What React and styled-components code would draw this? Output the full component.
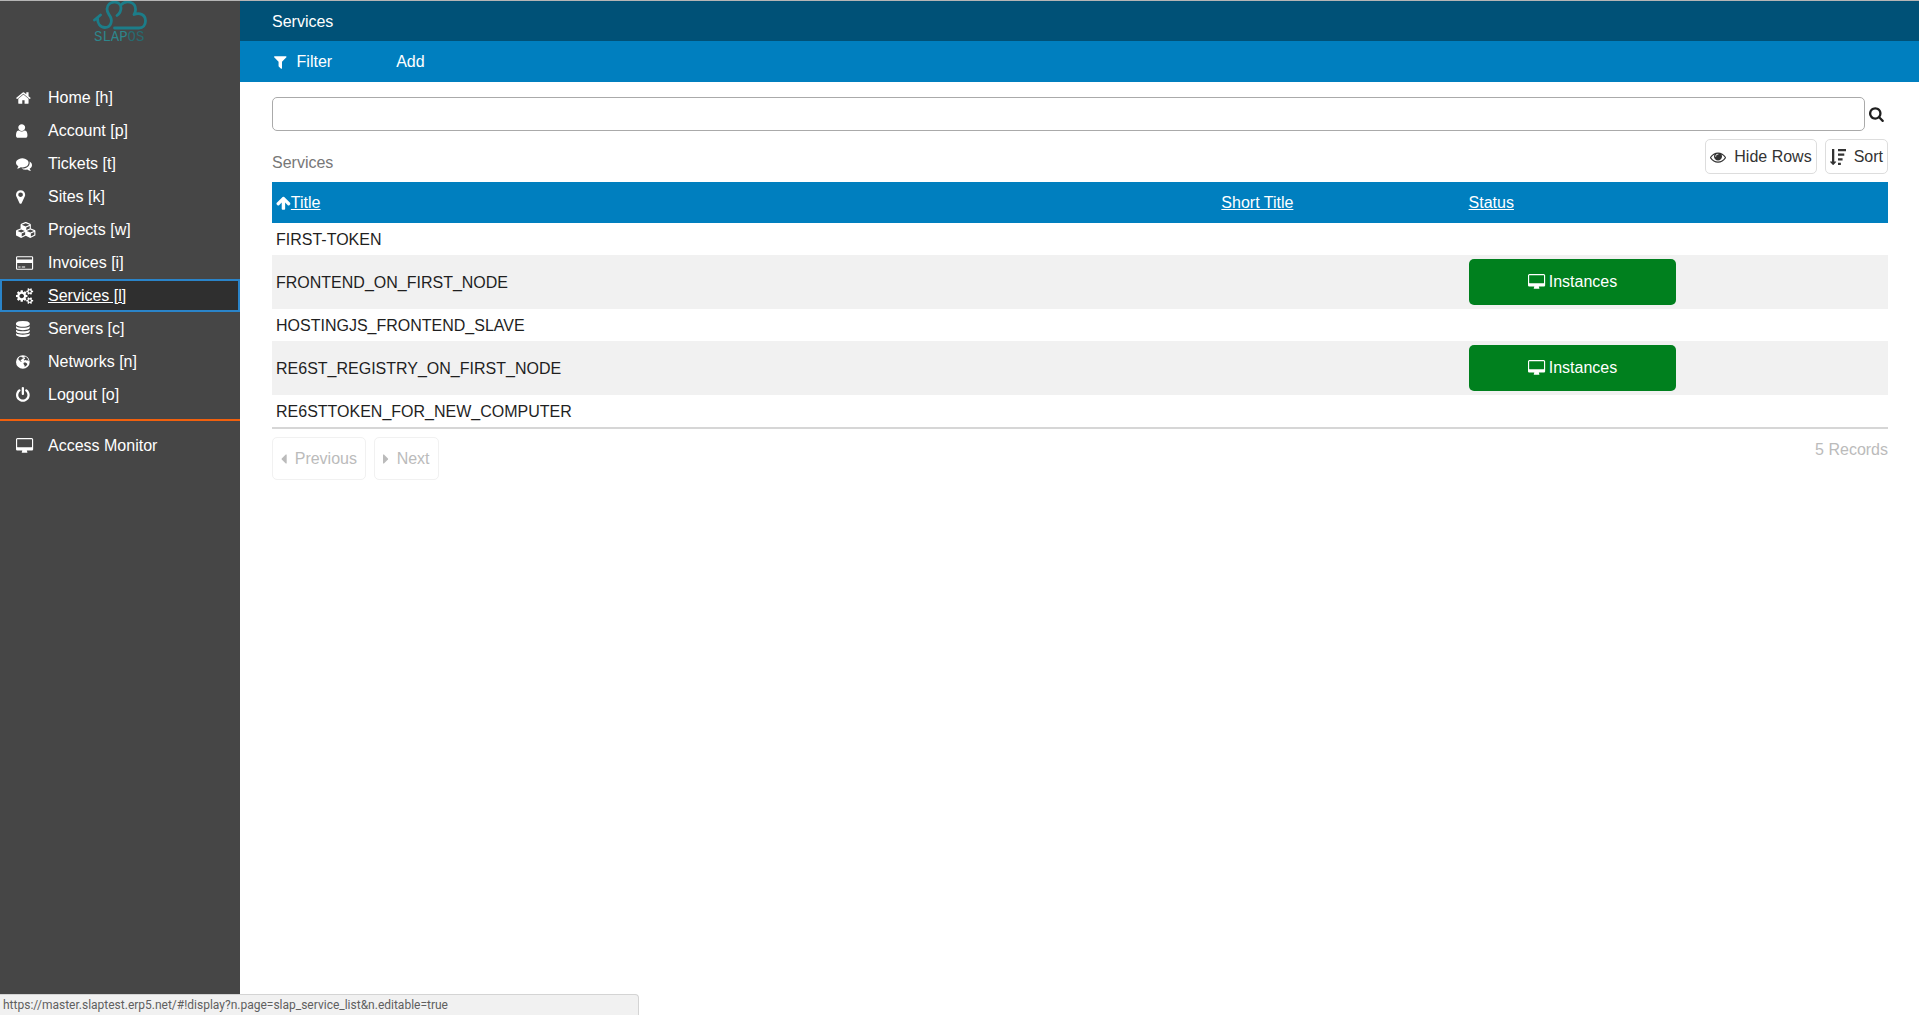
import React from "react";
import styled, { createGlobalStyle } from "styled-components";

const GlobalStyle = createGlobalStyle`
    * {
        box-sizing: border-box;
    }

    body {
        margin: 0;
        background: #fff;
        color: #1f1f1f;
        font-family: "Liberation Sans", Arial, sans-serif;
        font-size: 16px;
        line-height: 24px;
    }
`;

/* [min-x, width, path] on a 1792 unit em */
const gear = "v140q0 16-149 31-12 27-30 52 51 113 51 138 0 4-4 7-122 71-124 71-8 0-46-47t-52-68q-20 2-30 2t-30-2q-14 21-52 68t-46 47q-2 0-124-71-4-3-4-7 0-25 51-138-18-25-30-52-149-15-149-31v-140q0-16 149-31 13-29 30-52-51-113-51-138 0-4 4-7 4-2 35-20t59-34 30-16q8 0 46 46.5t52 67.5q20-2 30-2t30 2q51-71 92-112l6-2q4 0 124 70 4 3 4 7 0 25-51 138 17 23 30 52 149 15 149 31z";

const icons = {
    home: [64, 1664, "M1472 992v480q0 26-19 45t-45 19h-384v-384h-256v384h-384q-26 0-45-19t-19-45v-480q0-1 .5-3t.5-3l575-474 575 474q1 2 1 6zm223-69l-62 74q-8 9-21 11h-3q-13 0-21-7l-692-577-692 577q-12 8-24 7-13-2-21-11l-62-74q-8-10-7-23.5t11-21.5l719-599q32-26 76-26t76 26l244 204v-195q0-14 9-23t23-9h192q14 0 23 9t9 23v408l219 182q10 8 11 21.5t-7 23.5z"],
    user: [256, 1280, "M1536 1399q0 109-62.5 187t-150.5 78h-854q-88 0-150.5-78t-62.5-187q0-85 8.5-160.5t31.5-152 58.5-131 94-89 134.5-34.5q131 128 313 128t313-128q76 0 134.5 34.5t94 89 58.5 131 31.5 152 8.5 160.5zm-256-887q0 159-112.5 271.5t-271.5 112.5-271.5-112.5-112.5-271.5 112.5-271.5 271.5-112.5 271.5 112.5 112.5 271.5z"],
    comments: [0, 1792, "M1408 768q0 139-94 257t-256.5 186.5-353.5 68.5q-86 0-176-16-124 88-278 128-36 9-86 16h-3q-11 0-20.5-8t-11.5-21q-1-3-1-6.5t.5-6.5 2-6l2.5-5 3.5-5.5 4-5 4.5-5 4-4.5q5-6 23-25t26-29.5 22.5-29 25-38.5 20.5-44q-124-72-195-177t-71-224q0-139 94-257t256.5-186.5 353.5-68.5 353.5 68.5 256.5 186.5 94 257zm384 256q0 120-71 224.5t-195 176.5q10 24 20.5 44t25 38.5 22.5 29 26 29.5 23 25q1 1 4 4.5t4.5 5 4 5 3.5 5.5l2.5 5 2 6 .5 6.5-1 6.5q-3 14-13 22t-22 7q-50-7-86-16-154-40-278-128-90 16-176 16-271 0-472-132 58 4 88 4 161 0 309-45t264-129q125-92 192-212t67-254q0-77-23-152 129 71 204 178t75 230z"],
    marker: [384, 1024, "M1152 640q0-106-75-181t-181-75-181 75-75 181 75 181 181 75 181-75 75-181zm256 0q0 109-33 179l-364 774q-16 33-47.5 52t-67.5 19-67.5-19-46.5-52l-365-774q-33-70-33-179 0-212 150-362t362-150 362 150 150 362z"],
    cubes: [0, 2304, "M640 1632l384-192v-314l-384 164v342zm-64-454l404-173-404-173-404 173zm1088 454l384-192v-314l-384 164v342zm-64-454l404-173-404-173-404 173zm-448-293l384-165v-266l-384 164v267zm-64-379l441-189-441-189-441 189zm1088 518v416q0 36-19 67t-52 47l-448 224q-25 14-57 14t-57-14l-448-224q-4-2-7-4-2 2-7 4l-448 224q-25 14-57 14t-57-14l-448-224q-33-16-52-47t-19-67v-416q0-38 21.5-70t56.5-48l434-186v-400q0-38 21.5-70t56.5-48l448-192q23-10 50-10t50 10l448 192q35 16 56.5 48t21.5 70v400l434 186q36 16 57 48t21 70z"],
    card: [0, 1920, "M1760 128q66 0 113 47t47 113v1216q0 66-47 113t-113 47h-1600q-66 0-113-47t-47-113v-1216q0-66 47-113t113-47h1600zm-1600 128q-13 0-22.5 9.5t-9.5 22.5v224h1664v-224q0-13-9.5-22.5t-22.5-9.5h-1600zm1600 1280q13 0 22.5-9.5t9.5-22.5v-608h-1664v608q0 13 9.5 22.5t22.5 9.5h1600zm-1504-128v-128h256v128h-256zm384 0v-128h384v128h-384z"],
    cogs: [0, 1920, "M896 896q0-106-75-181t-181-75-181 75-75 181 75 181 181 75 181-75 75-181zm768 512q0-52-38-90t-90-38-90 38-38 90q0 53 37.5 90.5t90.5 37.5 90.5-37.5 37.5-90.5zm0-1024q0-52-38-90t-90-38-90 38-38 90q0 53 37.5 90.5t90.5 37.5 90.5-37.5 37.5-90.5zm-384 421v185q0 10-7 19.5t-16 10.5l-155 24q-11 35-32 76 34 48 90 115 7 11 7 20 0 12-7 19-23 30-82.5 89.5t-78.5 59.5q-11 0-21-7l-115-90q-37 19-77 31-11 108-23 155-7 24-30 24h-186q-11 0-20-7.5t-10-17.5l-23-153q-34-10-75-31l-118 89q-7 7-20 7-11 0-21-8-144-133-144-160 0-9 7-19 10-14 41-53t47-61q-23-44-35-82l-152-24q-10-1-17-9.5t-7-19.5v-185q0-10 7-19.5t16-10.5l155-24q11-35 32-76-34-48-90-115-7-11-7-20 0-12 7-20 22-30 82-89t79-59q11 0 21 7l115 90q34-18 77-32 11-108 23-154 7-24 30-24h186q11 0 20 7.5t10 17.5l23 153q34 10 75 31l118-89q8-7 20-7 11 0 21 8 144 133 144 160 0 8-7 19-12 16-42 54t-45 60q23 48 34 82l152 23q10 2 17 10.5t7 19.5zM1920 1338" + gear + "M1920 314" + gear],
    database: [128, 1536, "M896 768q237 0 443-43t325-127v170q0 69-103 128t-280 93.5-385 34.5-385-34.5-280-93.5-103-128v-170q119 84 325 127t443 43zm0 768q237 0 443-43t325-127v170q0 69-103 128t-280 93.5-385 34.5-385-34.5-280-93.5-103-128v-170q119 84 325 127t443 43zm0-384q237 0 443-43t325-127v170q0 69-103 128t-280 93.5-385 34.5-385-34.5-280-93.5-103-128v-170q119 84 325 127t443 43zm0-1152q208 0 385 34.5t280 93.5 103 128v128q0 69-103 128t-280 93.5-385 34.5-385-34.5-280-93.5-103-128v-128q0-69 103-128t280-93.5 385-34.5z"],
    globe: [128, 1536, "M896 128a768 768 0 1 1 0 1536a768 768 0 1 1 0-1536zM620 300L470 400L400 540L430 660L560 760L690 900L760 880L720 800L640 740L640 660L740 640L800 560L900 500L1010 460L930 380L800 380L740 310zM1100 280L1060 380L1160 470L1100 560L1000 640L1040 720L1200 680L1320 740L1420 700L1500 800L1540 720L1460 520L1340 390L1220 310zM1020 940L960 1060L1030 1220L1100 1300L1080 1440L1220 1380L1360 1240L1400 1120L1320 1040L1200 960z"],
    power: [128, 1536, "M1664 896q0 156-61 298t-164 245-245 164-298 61-298-61-245-164-164-245-61-298q0-182 80.5-343t226.5-270q43-32 95.5-25t83.5 50q32 42 24.5 94.5t-49.5 84.5q-98 74-151.5 181t-53.5 228q0 104 40.5 198.5t109.5 163.5 163.5 109.5 198.5 40.5 198.5-40.5 163.5-109.5 109.5-163.5 40.5-198.5q0-121-53.5-228t-151.5-181q-42-32-49.5-84.5t24.5-94.5q31-43 84-50t95 25q146 109 226.5 270t80.5 343zm-640-768v640q0 52-38 90t-90 38-90-38-38-90v-640q0-52 38-90t90-38 90 38 38 90z"],
    desktop: [0, 1920, "M1792 992v-832q0-13-9.5-22.5t-22.5-9.5h-1600q-13 0-22.5 9.5t-9.5 22.5v832q0 13 9.5 22.5t22.5 9.5h1600q13 0 22.5-9.5t9.5-22.5zm128-832v1088q0 66-47 113t-113 47h-544q0 37 16 77.5t32 71 16 43.5q0 26-19 45t-45 19h-512q-26 0-45-19t-19-45q0-14 16-44t32-70 16-78h-544q-66 0-113-47t-47-113v-1088q0-66 47-113t113-47h1600q66 0 113 47t47 113z"],
    filter: [192, 1408, "M1595 295q17 41-14 70l-493 493v742q0 42-39 59-13 5-25 5-27 0-45-19l-256-256q-19-19-19-45v-486l-493-493q-31-29-14-70 17-39 59-39h1280q42 0 59 39z"],
    search: [64, 1664, "M1216 832q0-185-131.5-316.5t-316.5-131.5-316.5 131.5-131.5 316.5 131.5 316.5 316.5 131.5 316.5-131.5 131.5-316.5zm512 832q0 52-38 90t-90 38q-54 0-90-38l-343-342q-179 124-399 124-143 0-273.5-55.5t-225-150-150-225-55.5-273.5 55.5-273.5 150-225 225-150 273.5-55.5 273.5 55.5 225 150 150 225 55.5 273.5q0 220-124 399l343 343q37 37 37 90z"],
    eye: [0, 1792, "M1664 960q-152-236-381-353 61 104 61 225 0 185-131.5 316.5t-316.5 131.5-316.5-131.5-131.5-316.5q0-121 61-225-229 117-381 353 133 205 333.5 326.5t434.5 121.5 434.5-121.5 333.5-326.5zm-720-384q0-20-14-34t-34-14q-125 0-214.5 89.5t-89.5 214.5q0 20 14 34t34 14 34-14 14-34q0-86 61-147t147-61q20 0 34-14t14-34zm848 384q0 34-20 69-140 230-376.5 368.5t-499.5 138.5-499.5-139-376.5-368q-20-35-20-69t20-69q140-229 376.5-368t499.5-139 499.5 139 376.5 368q20 35 20 69z"],
    sort: [0, 1792, "M704 1440q0 12-10 24l-319 319q-10 9-23 9-12 0-23-9l-320-320q-15-16-7-35 8-20 30-20h192v-1376q0-14 9-23t23-9h192q14 0 23 9t9 23v1376h192q14 0 23 9t9 23zM896 0h896v256h-896zM896 512h704v256h-704zM896 1024h512v256h-512zM896 1536h320v256h-320z"],
    up: [64, 1664, "M1675 971q0 51-37 90l-75 75q-38 38-91 38-54 0-90-38l-294-293v704q0 52-37.5 84.5t-90.5 32.5h-128q-53 0-90.5-32.5t-37.5-84.5v-704l-294 293q-36 38-90 38t-90-38l-75-75q-38-38-38-90 0-53 38-91l651-651q35-37 90-37 54 0 91 37l651 651q37 39 37 91z"],
    left: [512, 640, "M1152 448v896q0 26-19 45t-45 19-45-19l-448-448q-19-19-19-45t19-45l448-448q19-19 45-19t45 19 19 45z"],
    right: [576, 640, "M1152 896q0 26-19 45l-448 448q-19 19-45 19t-45-19-19-45v-896q0-26 19-45t45-19 45 19l448 448q19 19 19 45z"],
};

const Glyph = styled.svg`
    display: block;
    flex: none;
    height: 16px;
    fill: currentColor;
    overflow: visible;
`;

const Icon = ({ name }) => {
    const [x, width, path] = icons[name];
    return (
        <Glyph viewBox={`${x} 0 ${width} 1792`} width={(width * 16) / 1792} aria-hidden="true">
            <path fillRule={name === "globe" ? "evenodd" : "nonzero"} d={path} />
        </Glyph>
    );
};

const Page = styled.div`
    display: flex;
    min-height: 100vh;
    border-top: 1px solid #b5b5b5;
`;

const Sidebar = styled.aside`
    flex: none;
    width: 240px;
    background: #464646;
    color: #fff;
`;

const Logo = styled.svg`
    display: block;
    width: 70px;
    height: 46px;
    margin: 0 auto 34px;
`;

const MenuList = styled.ul`
    list-style: none;
    margin: 0;
    padding: 0 0 8px;

    & + & {
        border-top: 2px solid #f1600d;
        padding-top: 8px;
    }
`;

const MenuLink = styled.a`
    display: flex;
    align-items: center;
    height: 33px;
    padding: 0 14px;
    border: 2px solid ${(props) => (props.$active ? "#2a84c9" : "transparent")};
    background: ${(props) => (props.$active ? "#2f2f2f" : "transparent")};
    color: #fff;
    text-decoration: ${(props) => (props.$active ? "underline" : "none")};
`;

const MenuIcon = styled.span`
    flex: none;
    width: 32px;
`;

const Main = styled.main`
    flex: 1;
    min-width: 0;
`;

const Header = styled.header`
    height: 40px;
    padding: 9px 32px 0;
    background: #005177;
    color: #fff;
`;

const HeaderTitle = styled.h1`
    margin: 0;
    font-size: 16px;
    font-weight: 400;
`;

const Toolbar = styled.nav`
    display: flex;
    align-items: center;
    gap: 64px;
    height: 41px;
    padding: 0 32px;
    background: #007fbf;
`;

const ToolbarLink = styled.a`
    display: flex;
    align-items: center;
    gap: 10px;
    padding-left: ${(props) => (props.$icon ? "2px" : "0")};
    color: #fff;
    text-decoration: none;
`;

const Content = styled.div`
    padding: 15px 31px 15px 32px;
`;

const SearchForm = styled.form`
    display: flex;
    align-items: center;
    gap: 4px;
`;

const SearchInput = styled.input`
    flex: 1;
    min-width: 0;
    height: 34px;
    padding: 0 8px;
    border: 1px solid #aaa;
    border-radius: 5px;
    background: #fff;
    font: inherit;
`;

const SearchButton = styled.button`
    padding: 0 4px 0 0;
    border: 0;
    background: none;
    color: #1f1f1f;
`;

const ListHead = styled.div`
    display: flex;
    align-items: center;
    justify-content: space-between;
    height: 51px;
`;

const ListTitle = styled.h2`
    margin: 0;
    padding-top: 12px;
    color: #777;
    font-size: 16px;
    font-weight: 400;
`;

const ButtonGroup = styled.div`
    display: flex;
    gap: 8px;
`;

const Button = styled.button`
    display: flex;
    align-items: center;
    gap: 8px;
    height: 35px;
    padding: 0 4px;
    border: 1px solid #ddd;
    border-radius: 5px;
    background: #fff;
    color: #333;
    font: inherit;
`;

const PageButton = styled(Button)`
    height: 43px;
    padding: 0 8px;
    border-color: #f1f1f1;
    color: #bbb;
`;

const Table = styled.table`
    width: 100%;
    table-layout: fixed;
    border-collapse: collapse;
    border-bottom: 2px solid #d6d6d6;
`;

const HeadCell = styled.th`
    width: ${(props) => props.$width};
    height: 41px;
    padding: 0 4px;
    background: #007fbf;
    color: #fff;
    font-weight: 400;
    text-align: left;
`;

const SortLink = styled.a`
    color: #fff;
`;

const HeadLabel = styled.span`
    display: flex;
    align-items: center;
`;

const Row = styled.tr`
    &:nth-child(even) {
        background: #f1f1f1;
    }
`;

const Cell = styled.td`
    padding: ${(props) => (props.$text ? "5px 4px 3px" : "4px")};
`;

const InstancesLink = styled.a`
    display: flex;
    align-items: center;
    justify-content: center;
    gap: 4px;
    width: 50%;
    height: 46px;
    border-radius: 5px;
    background: #00801e;
    color: #fff;
    text-decoration: none;
`;

const ListFoot = styled.div`
    display: flex;
    justify-content: space-between;
    padding-top: 8px;
    color: #bbb;
`;

const Records = styled.span`
    padding-top: 1px;
`;

const StatusBar = styled.div`
    position: fixed;
    left: 0;
    bottom: 0;
    width: 33.3%;
    height: 21px;
    padding-left: 3px;
    border: 1px solid #d4d4d4;
    border-width: 1px 1px 0 0;
    border-radius: 0 4px 0 0;
    background: #f1f1f1;
    color: #5f5f5f;
    font-family: Roboto, sans-serif;
    font-size: 12px;
    line-height: 20px;
    white-space: nowrap;
`;

const menu = [
    { icon: "home", label: "Home [h]" },
    { icon: "user", label: "Account [p]" },
    { icon: "comments", label: "Tickets [t]" },
    { icon: "marker", label: "Sites [k]" },
    { icon: "cubes", label: "Projects [w]" },
    { icon: "card", label: "Invoices [i]" },
    { icon: "cogs", label: "Services [l]", active: true },
    { icon: "database", label: "Servers [c]" },
    { icon: "globe", label: "Networks [n]" },
    { icon: "power", label: "Logout [o]" },
];

const services = [
    { title: "FIRST-TOKEN" },
    { title: "FRONTEND_ON_FIRST_NODE", instances: true },
    { title: "HOSTINGJS_FRONTEND_SLAVE" },
    { title: "RE6ST_REGISTRY_ON_FIRST_NODE", instances: true },
    { title: "RE6STTOKEN_FOR_NEW_COMPUTER" },
];

const MenuItem = ({ icon, label, active }) => (
    <li>
        <MenuLink href="#" $active={active}>
            <MenuIcon>
                <Icon name={icon} />
            </MenuIcon>
            {label}
        </MenuLink>
    </li>
);

const SlaposLogo = () => (
    <Logo viewBox="0 0 70 46" role="img" aria-label="SlapOS">
        <g fill="none" stroke="#1c7d89" strokeWidth="2.8" strokeLinecap="round" strokeLinejoin="round">
            <path d="M9.5 19L15.5 14M12.5 17C12.5 22 15 26.5 20 26.5C26 26.5 27.5 20 25.5 16C24 13 22 12 22 8C22.5 -1 36 -1 36 7C36 11 34 13 32 14.5" />
            <path d="M36 4C40 -1 51 0 50.5 9C50.5 11 50 12 49 13.5C55 11 60.5 14 60.5 20C60.5 24 58 27 54 27H29.5" />
        </g>
        <text x="9" y="40" fill="#2d868c" fontFamily="Liberation Mono, monospace" fontSize="14">
            SLAP<tspan fill="#286a70">OS</tspan>
        </text>
    </Logo>
);

const App = () => {
    return (
        <>
            <GlobalStyle />
            <Page>
                <Sidebar>
                    <SlaposLogo />
                    <MenuList>
                        {menu.map((item) => (
                            <MenuItem key={item.label} {...item} />
                        ))}
                    </MenuList>
                    <MenuList>
                        <MenuItem icon="desktop" label="Access Monitor" />
                    </MenuList>
                </Sidebar>
                <Main>
                    <Header>
                        <HeaderTitle>Services</HeaderTitle>
                    </Header>
                    <Toolbar>
                        <ToolbarLink href="#" $icon>
                            <Icon name="filter" />
                            Filter
                        </ToolbarLink>
                        <ToolbarLink href="#">Add</ToolbarLink>
                    </Toolbar>
                    <Content>
                        <SearchForm>
                            <SearchInput type="text" aria-label="Search" />
                            <SearchButton type="button" aria-label="Search">
                                <Icon name="search" />
                            </SearchButton>
                        </SearchForm>
                        <ListHead>
                            <ListTitle>Services</ListTitle>
                            <ButtonGroup>
                                <Button type="button">
                                    <Icon name="eye" />
                                    Hide Rows
                                </Button>
                                <Button type="button">
                                    <Icon name="sort" />
                                    Sort
                                </Button>
                            </ButtonGroup>
                        </ListHead>
                        <Table>
                            <thead>
                                <tr>
                                    <HeadCell $width="58.5%">
                                        <HeadLabel>
                                            <Icon name="up" />
                                            <SortLink href="#">Title</SortLink>
                                        </HeadLabel>
                                    </HeadCell>
                                    <HeadCell $width="15.3%">
                                        <SortLink href="#">Short Title</SortLink>
                                    </HeadCell>
                                    <HeadCell>
                                        <SortLink href="#">Status</SortLink>
                                    </HeadCell>
                                </tr>
                            </thead>
                            <tbody>
                                {services.map((service) => (
                                    <Row key={service.title}>
                                        <Cell $text>{service.title}</Cell>
                                        <Cell />
                                        <Cell>
                                            {service.instances && (
                                                <InstancesLink href="#">
                                                    <Icon name="desktop" />
                                                    Instances
                                                </InstancesLink>
                                            )}
                                        </Cell>
                                    </Row>
                                ))}
                            </tbody>
                        </Table>
                        <ListFoot>
                            <ButtonGroup>
                                <PageButton type="button">
                                    <Icon name="left" />
                                    Previous
                                </PageButton>
                                <PageButton type="button">
                                    <Icon name="right" />
                                    Next
                                </PageButton>
                            </ButtonGroup>
                            <Records>5 Records</Records>
                        </ListFoot>
                    </Content>
                </Main>
            </Page>
            <StatusBar>https://master.slaptest.erp5.net/#!display?n.page=slap_service_list&amp;n.editable=true</StatusBar>
        </>
    );
};

export default App;
